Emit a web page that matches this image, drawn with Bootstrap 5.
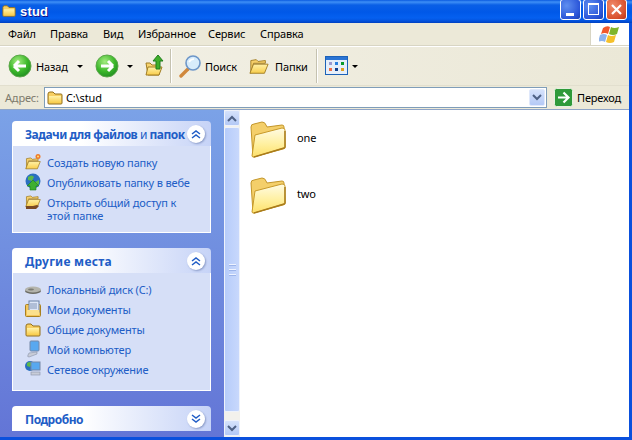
<!DOCTYPE html>
<html lang="ru">
<head>
<meta charset="utf-8">
<title>stud</title>
<link href="https://cdn.jsdelivr.net/npm/bootstrap@5.3.0/dist/css/bootstrap.min.css" rel="stylesheet">
<style>
html,body{width:632px;height:440px;overflow:hidden;margin:0}
body{font-family:"Noto Sans","Liberation Sans",sans-serif;font-size:11px;line-height:13px;letter-spacing:-.15px;color:#000;background:#ece9d8}
.defs-holder{width:0;height:0;display:block}
.xp-frame{width:632px;height:440px;background:#0a50dd;padding:0 3px 3px 0}
.xp-title{height:23px;margin-right:-3px;padding-left:1px;background:linear-gradient(#0a5ae0 0,#3e8ff6 2px,#0a5fe6 5px,#0058e8 12px,#0560f0 18px,#0352dc 21px,#0040c0 23px)}
.xp-title-text{font:bold 13px "Liberation Sans",sans-serif;letter-spacing:.2px;color:#fff;text-shadow:1px 1px 0 #0f1089;margin-left:3px}
.win-group{gap:2px;padding-right:5px;margin-top:-3px}
.win-btn{width:21px;height:21px;border:1px solid #fff;border-radius:3px;background:radial-gradient(circle at 30% 30%,#5f8ff0,#2a55d8 70%,#1a3fb0)}
.win-close{background:radial-gradient(circle at 30% 30%,#f08a6a,#d8502c 70%,#b8341a)}
.xp-menu{height:23px;border-bottom:1px solid #d8d5c4;background:#ece9d8}
.flag-box{width:39px;height:22px;background:#fff;border-left:1px solid #d8d5c4}
.xp-tools{height:41px;background:linear-gradient(90deg,#f3f1e7,#ebe8d7);border-top:1px solid #fff;border-bottom:1px solid #e2dfce}
.sep{width:1px;height:34px;background:#c5c2b0;border-right:1px solid #fff;box-sizing:content-box}
.mini-arrow{width:0;height:0;border-left:3px solid transparent;border-right:3px solid transparent;border-top:3px solid #000}
.xp-addr{height:23px;background:#ece9d8}
.addr-label{color:#7d7a6c;width:44px;padding-left:5px}
.addr-field{width:503px;height:21px;background:#fff;border:1px solid #7f9db9;padding-left:2px}
.combo-btn{width:16px;height:17px;margin-right:1px;background:linear-gradient(#d5e2fb,#b4c9f6);border:1px solid #dfe8fb;border-radius:2px}
.xp-main{height:328px;border-top:1px solid #8fa5c8}
.side-pane{width:224px;background:linear-gradient(#7ba2e7,#6375d6);padding:11px 13px 0 12px}
.task-box + .task-box{margin-top:15px}
.task-head{height:25px;padding:0 6px 0 13px;border-radius:4px 4px 0 0;background:linear-gradient(90deg,#fff 35%,#c6d3f7);color:#215dc6;font:bold 12px/25px "Noto Sans","Liberation Sans",sans-serif}
.task-head > span{padding-top:2px}
.head-tight{letter-spacing:-.5px}
.head-wide{letter-spacing:.25px}
.thin-word{font-weight:400}
.chev{width:18px;height:18px;border-radius:50%;background:#fff;box-shadow:1px 1px 2px #8c9cc8;flex:none}
.task-body{background:#d6dff7;border:1px solid #fff;border-top:0;padding:7px 6px 10px 12px;color:#215dc6}
.task-row{min-height:20px;gap:6px}
.task-row svg{flex:none}
.task-row span{padding-top:3px}
.scroll-rail{width:16px;background:#f3f1ec;padding-bottom:1px}
.rail-btn{height:16px;background:linear-gradient(#d5e2fb,#b4c9f6);border:1px solid #eef2fb;border-radius:2px}
.rail-thumb{height:285px;margin:1px 0 8px;background:linear-gradient(90deg,#b6ccfa,#c8d8fc);border:1px solid #eef2fb;border-radius:2px}
.grip{width:7px;height:1px;background:#eef3ff;box-shadow:0 1px 0 #9db5ea}
.file-area{background:#fff;padding:10px 0 0 10px}
.file-item{height:38px;gap:11px}
.file-item span{padding-bottom:4px}
.file-item + .file-item{margin-top:18px}
</style>
</head>
<body>
<svg class="defs-holder" aria-hidden="true">
<defs>
<linearGradient id="fg" x1="0" y1="0" x2="0" y2="1"><stop offset="0" stop-color="#fff2a8"/><stop offset="1" stop-color="#f8cc4a"/></linearGradient>
<linearGradient id="fbig" x1="0" y1="0" x2="0" y2="1"><stop offset="0" stop-color="#fffbe4"/><stop offset=".55" stop-color="#fff0a0"/><stop offset="1" stop-color="#fde06a"/></linearGradient>
<radialGradient id="grn" cx=".4" cy=".3" r=".8"><stop offset="0" stop-color="#a4ec80"/><stop offset=".55" stop-color="#3cb82a"/><stop offset="1" stop-color="#1a8420"/></radialGradient>
<symbol id="folderBig" viewBox="0 0 36 38">
<path d="M3 37L1 7q0-3 3-3l8-2q3 0 4 3l1 2 15-2q2 0 2 2l1 20q0 2-2 2z" fill="#f4cf6a" stroke="#c3962a"/>
<path d="M5 15L32 8q3 0 3 2V27q0 1-1 1L4 37q-2 0-2-1z" fill="url(#fbig)" stroke="#c89a2a"/>
<path d="M35 11V27q0 1-1 1L4 37" fill="none" stroke="#a97c1c" stroke-width="1.400"/>
</symbol>
<symbol id="folderSm" viewBox="0 0 16 16">
<path d="M1 4q0-2 2-2h3l2 2h6q1 0 1 1v8q0 1-1 1H2q-1 0-1-1z" fill="#f7cf62" stroke="#94701a"/>
<path d="M2 6h12v7H2z" fill="url(#fg)"/>
</symbol>
<symbol id="openFolder" viewBox="0 0 22 22">
<path d="M2 5l6-1 2 2 8-1v3H5L2 19z" fill="#f6cf6a" stroke="#a07c22"/>
<path d="M5 9h16l-4 10H1z" fill="url(#fg)" stroke="#a07c22"/>
</symbol>
</defs>
</svg>
<div class="xp-frame d-flex flex-column">
  <div class="xp-title d-flex align-items-center">
    <svg width="16" height="14"><use href="#folderSm"/></svg>
    <span class="xp-title-text flex-grow-1">stud</span>
    <div class="win-group d-flex align-items-center">
      <div class="win-btn d-flex justify-content-center"><svg width="19" height="19"><rect x="5" y="13" width="8" height="3" fill="#fff"/></svg></div>
      <div class="win-btn"><svg width="19" height="19"><rect x="4.500" y="4.500" width="10" height="10" fill="none" stroke="#fff"/><rect x="4" y="3" width="11" height="2" fill="#fff"/></svg></div>
      <div class="win-btn win-close"><svg width="19" height="19"><path d="M5 5l9 9M14 5l-9 9" stroke="#fff" stroke-width="2.200"/></svg></div>
    </div>
  </div>
  <div class="xp-menu d-flex align-items-center me-n1">
    <div class="d-flex flex-grow-1 align-items-center">
      <span class="ms-2" style="width:42px">Файл</span>
      <span style="width:53px">Правка</span>
      <span style="width:35px">Вид</span>
      <span style="width:70px">Избранное</span>
      <span style="width:52px">Сервис</span>
      <span>Справка</span>
    </div>
    <div class="flag-box d-flex justify-content-center align-items-center">
      <svg width="22" height="20" viewBox="0 0 22 20">
        <path d="M4 4q4-3 7-1l-2 7q-3-2-7 0z" fill="#f0582c"/>
        <path d="M12 3q3 2 8 0l-2 7q-4 2-8 0z" fill="#7fb52a"/>
        <path d="M1 11q4-2 7 0l-2 7q-3-2-7 0z" fill="#8db3ee"/>
        <path d="M9 11q3 2 8 0l-2 7q-4 2-8 0z" fill="#f5c02a"/>
      </svg>
    </div>
  </div>
  <div class="xp-tools d-flex align-items-center ps-2">
    <svg width="24" height="24" viewBox="0 0 24 24"><circle cx="12" cy="12" r="11" fill="url(#grn)" stroke="#5ca64a"/><path d="M6 12h12M6 12l5-5M6 12l5 5" stroke="#fff" stroke-width="3" fill="none"/></svg>
    <span class="ms-1" style="width:41px">Назад</span>
    <span class="mini-arrow"></span>
    <svg width="24" height="24" viewBox="0 0 24 24" style="margin-left:12px"><circle cx="12" cy="12" r="11" fill="url(#grn)" stroke="#5ca64a"/><path d="M18 12H6M18 12l-5-5M18 12l-5 5" stroke="#fff" stroke-width="3" fill="none"/></svg>
    <span class="mini-arrow ms-2"></span>
    <svg width="20" height="24" viewBox="0 0 20 24" style="margin-left:12px"><path d="M1 9h4l2 2h7v10H3z" fill="#f7d36e" stroke="#a07c22"/><path d="M3 13h14l-3 8H1z" fill="url(#fg)" stroke="#a07c22"/><path d="M11 15V7H8l5-6 5 6h-3v8z" fill="#3fae2a" stroke="#1f7d1c"/></svg>
    <span class="sep" style="margin:0 6px 0 5px"></span>
    <svg width="24" height="24" viewBox="0 0 24 24"><path d="M10 15L3 22" stroke="#d0883c" stroke-width="3.400" stroke-linecap="round"/><circle cx="15" cy="9" r="7" fill="#d7ecfb" stroke="#6d96c8" stroke-width="1.600"/><path d="M11 8q2-3 5-3" stroke="#fff" stroke-width="1.500" fill="none"/></svg>
    <span style="margin-left:3px;width:43px">Поиск</span>
    <svg width="22" height="20"><use href="#openFolder"/></svg>
    <span style="margin-left:5px;width:41px">Папки</span>
    <span class="sep" style="margin-right:7px"></span>
    <svg width="23" height="20" viewBox="0 0 23 20"><rect x=".5" y=".5" width="22" height="18" fill="#e6effa" stroke="#1c62b8"/><rect x="1" y="1" width="21" height="3" fill="#2a74d4"/><rect x="4" y="6" width="3" height="3" fill="#9a9ad0"/><rect x="10" y="6" width="3" height="3" fill="#2a80e0"/><rect x="16" y="6" width="3" height="3" fill="#0a9a2a"/><rect x="4" y="12" width="3" height="3" fill="#f0704a"/><rect x="10" y="12" width="3" height="3" fill="#12408c"/><rect x="16" y="12" width="3" height="3" fill="#e0a020"/></svg>
    <span class="mini-arrow ms-1"></span>
  </div>
  <div class="xp-addr d-flex align-items-center">
    <span class="addr-label">Адрес:</span>
    <div class="addr-field d-flex align-items-center">
      <svg width="16" height="16"><use href="#folderSm"/></svg>
      <span class="flex-grow-1" style="margin-left:3px">C:\stud</span>
      <div class="combo-btn d-flex justify-content-center align-items-center"><svg width="10" height="7"><path d="M1 1l4 4 4-4" stroke="#4d6185" stroke-width="2" fill="none"/></svg></div>
    </div>
    <svg width="19" height="19" viewBox="0 0 19 19" style="margin-left:7px"><rect x=".5" y=".5" width="18" height="18" rx="2" fill="#2f9a3a" stroke="#e6f0e0"/><path d="M4 9.500h10M9.500 4.500l5 5-5 5" stroke="#fff" stroke-width="2.200" fill="none"/></svg>
    <span style="margin-left:4px">Переход</span>
  </div>
  <div class="xp-main d-flex">
    <aside class="side-pane">
      <div class="task-box">
        <div class="task-head d-flex justify-content-between align-items-center">
          <span class="text-nowrap head-tight">Задачи для файлов <span class="thin-word">и</span> папок</span>
          <div class="chev d-flex justify-content-center align-items-center"><svg width="10" height="10"><path d="M1 5l4-3 4 3M1 9l4-3 4 3" stroke="#215dc6" stroke-width="1.500" fill="none"/></svg></div>
        </div>
        <div class="task-body">
          <div class="task-row d-flex"><svg width="16" height="18" viewBox="0 0 16 18"><use href="#openFolder" y="2" width="16" height="16"/><circle cx="13" cy="3.500" r="2.500" fill="#ef7a2a"/><circle cx="13" cy="3.500" r="1" fill="#ffe27a"/></svg><span>Создать новую папку</span></div>
          <div class="task-row d-flex"><svg width="16" height="18" viewBox="0 0 16 18"><circle cx="8" cy="8" r="7.500" fill="#2a6fc0"/><path d="M3 4q4-3 6 0l-2 4-4-1zM10 9l4-2 0 4-3 2z" fill="#5cb84a"/><path d="M8 7l6 6h-3v4H5v-4H2z" fill="#3fb030" stroke="#1f7d1c" stroke-width=".6"/></svg><span>Опубликовать папку в вебе</span></div>
          <div class="task-row d-flex"><svg width="16" height="18" viewBox="0 0 16 18"><use href="#openFolder" width="16" height="16"/><path d="M1 13h7l4-1 2 1-3 3H1z" fill="#7a4a24"/></svg><span>Открыть общий доступ к<br>этой папке</span></div>
        </div>
      </div>
      <div class="task-box">
        <div class="task-head d-flex justify-content-between align-items-center">
          <span class="head-wide">Другие места</span>
          <div class="chev d-flex justify-content-center align-items-center"><svg width="10" height="10"><path d="M1 5l4-3 4 3M1 9l4-3 4 3" stroke="#215dc6" stroke-width="1.500" fill="none"/></svg></div>
        </div>
        <div class="task-body">
          <div class="task-row d-flex"><svg width="16" height="18" viewBox="0 0 16 18"><ellipse cx="8" cy="11" rx="8" ry="3" fill="#6c6c64"/><ellipse cx="8" cy="9.500" rx="8" ry="3" fill="#b4b4ac"/><ellipse cx="6" cy="9.500" rx="3" ry="1" fill="#7c7c74"/></svg><span>Локальный диск (C:)</span></div>
          <div class="task-row d-flex"><svg width="16" height="18" viewBox="0 0 16 18"><rect x=".5" y="4.500" width="15" height="12" rx="1" fill="#f4c65a" stroke="#a9801f"/><rect x="4" y="1" width="10" height="11" fill="#dde6f6" stroke="#6d84a8"/><path d="M5 4h7M5 6h7M5 8h7" stroke="#8296b8"/><rect x="2" y="10" width="12" height="5" fill="#fbe08c"/></svg><span>Мои документы</span></div>
          <div class="task-row d-flex"><svg width="16" height="18" viewBox="0 0 16 18"><use href="#folderSm" y="2" width="16" height="16"/></svg><span>Общие документы</span></div>
          <div class="task-row d-flex"><svg width="16" height="18" viewBox="0 0 16 18"><rect x="5" y="1" width="9" height="10" rx="1" fill="#58a8f0" stroke="#7488a8"/><path d="M4 13l8-1v2l-8 3q-2 0-1-2z" fill="#c8ccd8" stroke="#8892a8" stroke-width=".6"/></svg><span>Мой компьютер</span></div>
          <div class="task-row d-flex"><svg width="16" height="18" viewBox="0 0 16 18"><circle cx="5" cy="6" r="5" fill="#2a6fc0"/><path d="M2 3q3-2 5 0l-2 4-3-1z" fill="#5cb84a"/><rect x="6" y="2" width="9" height="8" fill="#58a8f0" stroke="#7488a8"/><rect x="6" y="12" width="9" height="3" fill="#c8ccd8" stroke="#8892a8" stroke-width=".6"/></svg><span>Сетевое окружение</span></div>
        </div>
      </div>
      <div class="task-box">
        <div class="task-head d-flex justify-content-between align-items-center">
          <span class="head-tight">Подробно</span>
          <div class="chev d-flex justify-content-center align-items-center"><svg width="10" height="10"><path d="M1 1l4 3 4-3M1 5l4 3 4-3" stroke="#215dc6" stroke-width="1.500" fill="none"/></svg></div>
        </div>
      </div>
    </aside>
    <div class="scroll-rail d-flex flex-column">
      <div class="rail-btn d-flex justify-content-center align-items-center"><svg width="10" height="7"><path d="M1 6l4-4 4 4" stroke="#4d6185" stroke-width="2" fill="none"/></svg></div>
      <div class="rail-thumb d-flex flex-column justify-content-center align-items-center gap-1"><span class="grip"></span><span class="grip"></span><span class="grip"></span></div>
      <div class="rail-btn d-flex justify-content-center align-items-center"><svg width="10" height="7"><path d="M1 1l4 4 4-4" stroke="#4d6185" stroke-width="2" fill="none"/></svg></div>
    </div>
    <main class="file-area flex-grow-1">
      <div class="file-item d-flex align-items-center"><svg width="36" height="38"><use href="#folderBig"/></svg><span>one</span></div>
      <div class="file-item d-flex align-items-center"><svg width="36" height="38"><use href="#folderBig"/></svg><span>two</span></div>
    </main>
  </div>
</div>
</body>
</html>
